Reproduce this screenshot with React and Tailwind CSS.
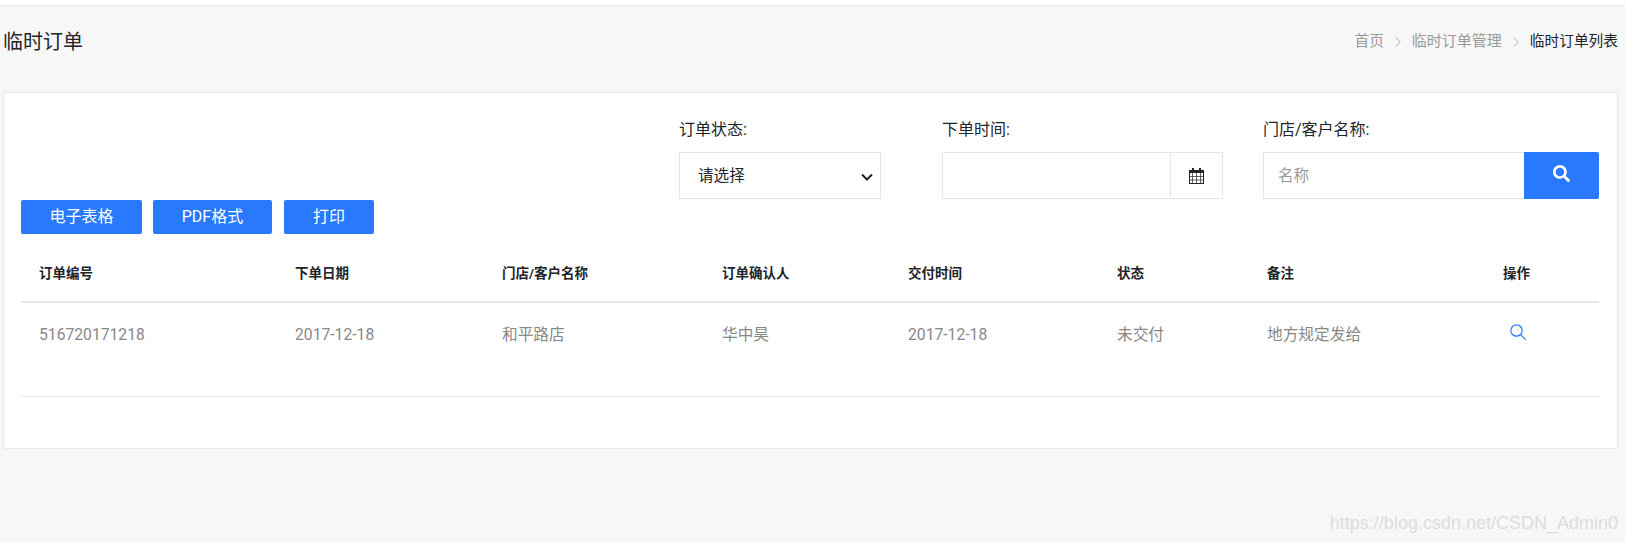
import { FaSearch } from 'react-icons/fa'
import { ChevronRight } from 'lucide-react'

const CJK = '[font-family:Roboto,"Noto_Sans_CJK_SC",sans-serif]'

const columns = [
  { title: '订单编号', value: '516720171218', width: 'w-[256px]' },
  { title: '下单日期', value: '2017-12-18', width: 'w-[207px]' },
  { title: '门店/客户名称', value: '和平路店', width: 'w-[220px]' },
  { title: '订单确认人', value: '华中昊', width: 'w-[186px]' },
  { title: '交付时间', value: '2017-12-18', width: 'w-[209px]' },
  { title: '状态', value: '未交付', width: 'w-[150px]' },
  { title: '备注', value: '地方规定发给', width: 'w-[236px]' },
]

function CalendarIcon() {
  return (
    <svg width="15" height="16" viewBox="0 0 15 16" fill="none" className="text-[#212529]">
      <rect x="0.5" y="2.5" width="14" height="13" stroke="currentColor" />
      <rect x="0" y="2" width="15" height="3" fill="currentColor" />
      <rect x="3" y="0" width="2" height="4" fill="currentColor" />
      <rect x="10" y="0" width="2" height="4" fill="currentColor" />
      <path d="M0 8.5h15M0 12h15M3.5 5v11M7.5 5v11M11.5 5v11" stroke="currentColor" strokeWidth="0.7" />
    </svg>
  )
}

function ActionSearchIcon() {
  return (
    <svg width="16" height="16" viewBox="0 0 16 16" fill="none" stroke="#2979ff" strokeWidth="1.2">
      <circle cx="6.5" cy="6.5" r="5.7" />
      <path d="M10.6 10.6L15.6 15.6" />
    </svg>
  )
}

function Button({ children, width }) {
  return (
    <button className={`h-[34px] rounded-[2px] bg-[#2979ff] text-[16px] text-white ${width}`}>
      {children}
    </button>
  )
}

function Filter({ label, children, className }) {
  return (
    <div className={className}>
      <label className="block text-[16px] leading-[20px] text-[#212529]">{label}</label>
      <div className="mt-[12px] flex h-[47px]">{children}</div>
    </div>
  )
}

export default function App() {
  return (
    <div className={`h-[542px] overflow-hidden bg-[#f7f7f7] ${CJK}`}>
      <div className="h-[6px] border-b border-[#e6e6e6] bg-white" />

      {/* Title + breadcrumb */}
      <div className="flex h-[86px] items-center justify-between pb-[15px] pl-[3px] pr-[7px]">
        <h1 className="text-[20px] font-normal text-[#212529]">临时订单</h1>
        <nav className="flex items-center text-[14.7px] text-[#999]">
          <span>首页</span>
          <ChevronRight size={18} strokeWidth={1} className="mx-[5px]" />
          <span className="text-[15px]">临时订单管理</span>
          <ChevronRight size={18} strokeWidth={1} className="mx-[5px]" />
          <span className="text-[#212529]">临时订单列表</span>
        </nav>
      </div>

      <div className="ml-[3px] mr-[7px] h-[357px] rounded-[2px] border border-[#e8e8e8] bg-white pl-[17px] pr-[18px]">
        {/* Filters */}
        <div className="flex justify-end pt-[27px]">
          <Filter label="订单状态:" className="w-[202px]">
            <div className="relative w-full">
              <select className="h-full w-full appearance-none border border-[#e6e6e6] bg-white pl-[18px] pt-[2px] text-[15.6px] text-[#212529]">
                <option>请选择</option>
              </select>
              <svg width="12" height="8" viewBox="0 0 12 8" fill="none" stroke="#212529" strokeWidth="2" className="pointer-events-none absolute right-[8px] top-[21px]">
                <path d="M1 1.5l5 5 5-5" />
              </svg>
            </div>
          </Filter>
          <Filter label="下单时间:" className="ml-[61px] w-[281px]">
            <input className="min-w-0 flex-1 border border-[#e6e6e6] outline-none" />
            <span className="flex w-[52px] items-center justify-center border border-l-0 border-[#e6e6e6]">
              <CalendarIcon />
            </span>
          </Filter>
          <Filter label="门店/客户名称:" className="ml-[40px] w-[336px]">
            <input
              placeholder="名称"
              className="min-w-0 flex-1 border border-r-0 border-[#e6e6e6] pl-[14px] pt-[2px] text-[15.6px] outline-none placeholder:text-[#999]"
            />
            <button className="flex w-[75px] items-center justify-center rounded-r-[2px] bg-[#2979ff] text-white">
              <FaSearch size={17} className="mb-[5px]" />
            </button>
          </Filter>
        </div>

        {/* Export buttons */}
        <div className="mt-[1px] flex gap-[11px]">
          <Button width="w-[121px]">电子表格</Button>
          <Button width="w-[119px]">PDF格式</Button>
          <Button width="ml-[1px] w-[90px]">打印</Button>
        </div>

        <table className="w-full table-fixed">
          <thead>
            <tr className="h-[68px] border-b-[2px] border-[#e8e8e8] text-left">
              {columns.map((col) => (
                <th key={col.title} className={`pl-[18px] pt-[12px] text-[13.5px] font-bold text-[#212529] ${col.width}`}>
                  {col.title}
                </th>
              ))}
              <th className="pl-[18px] pt-[12px] text-left text-[13.5px] font-bold text-[#212529]">操作</th>
            </tr>
          </thead>
          <tbody>
            <tr className="h-[94px] border-b border-[#e8e8e8]">
              {columns.map((col) => (
                <td key={col.title} className="pb-[29px] pl-[18px] text-[15.7px] text-[#888]">
                  {col.value}
                </td>
              ))}
              <td className="pb-[35px] pl-[25px]">
                <ActionSearchIcon />
              </td>
            </tr>
          </tbody>
        </table>
      </div>

      {/* Blog watermark */}
      <div className="pr-[7px] pt-[62px] text-right font-['Liberation_Sans',sans-serif] text-[18px] leading-[24px] text-[#dcdcdc]">
        https://blog.csdn.net/CSDN_Admin0
      </div>
    </div>
  )
}
